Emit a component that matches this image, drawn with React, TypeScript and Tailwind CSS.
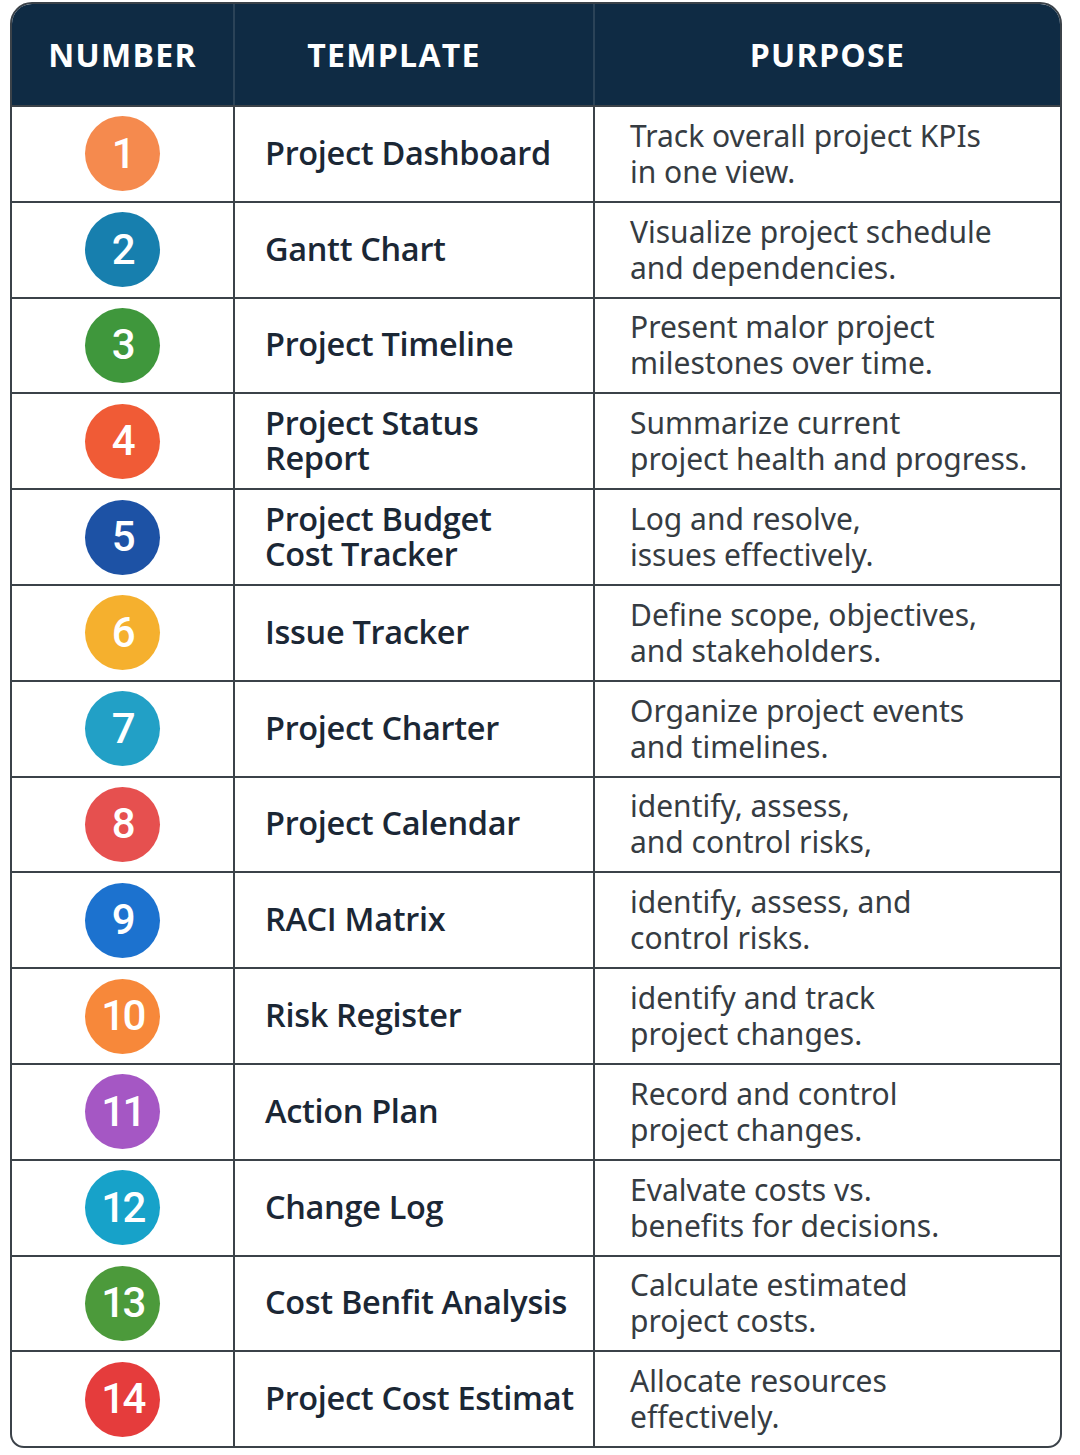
const rows = [
  { n: 1, color: "bg-[#f58a4e]", name: ["Project Dashboard"], purpose: ["Track overall project KPIs", "in one view."] },
  { n: 2, color: "bg-[#177fae]", name: ["Gantt Chart"], purpose: ["Visualize project schedule", "and dependencies."] },
  { n: 3, color: "bg-[#3f973c]", name: ["Project Timeline"], purpose: ["Present malor project", "milestones over time."] },
  { n: 4, color: "bg-[#f05b36]", name: ["Project Status", "Report"], purpose: ["Summarize current", "project health and progress."] },
  { n: 5, color: "bg-[#1d52a5]", name: ["Project Budget", "Cost Tracker"], purpose: ["Log and resolve,", "issues effectively."] },
  { n: 6, color: "bg-[#f5b02e]", name: ["Issue Tracker"], purpose: ["Define scope, objectives,", "and stakeholders."] },
  { n: 7, color: "bg-[#22a0c6]", name: ["Project Charter"], purpose: ["Organize project events", "and timelines."] },
  { n: 8, color: "bg-[#e6504f]", name: ["Project Calendar"], purpose: ["identify, assess,", "and control risks,"] },
  { n: 9, color: "bg-[#1c72cf]", name: ["RACI Matrix"], purpose: ["identify, assess, and", "control risks."] },
  { n: 10, color: "bg-[#f7883a]", name: ["Risk Register"], purpose: ["identify and track", "project changes."] },
  { n: 11, color: "bg-[#a557c4]", name: ["Action Plan"], purpose: ["Record and control", "project changes."] },
  { n: 12, color: "bg-[#17a2c9]", name: ["Change Log"], purpose: ["Evalvate costs vs.", "benefits for decisions."] },
  { n: 13, color: "bg-[#4c9a3b]", name: ["Cost Benfit Analysis"], purpose: ["Calculate estimated", "project costs."] },
  { n: 14, color: "bg-[#e53c3c]", name: ["Project Cost Estimat"], purpose: ["Allocate resources", "effectively."] },
];

const App = () => {
  return (
    <div className="w-[1080px] h-[1455px] bg-white pl-[10px] pt-[2px]">
      <div className="w-[1052px] border-2 border-[#3b4249] rounded-t-[22px] rounded-b-[14px] overflow-hidden bg-white">
        {/* Header */}
        <div className="grid grid-cols-[221px_360px_1fr] h-[101px] bg-[#0f2b44] text-white font-['Open_Sans',sans-serif] font-bold text-[32px] tracking-[0.04em]">
          <div className="flex items-center justify-center">NUMBER</div>
          <div className="flex items-center justify-center pr-[40px] border-l-2 border-[#2b4358]">TEMPLATE</div>
          <div className="flex items-center justify-center border-l-2 border-[#2b4358]">PURPOSE</div>
        </div>

        {/* Rows */}
        {rows.map((r) => (
          <div key={r.n} className="grid grid-cols-[221px_360px_1fr] h-[95.8px] border-t-2 border-[#3b4249]">
            <div className="flex items-center justify-center">
              <div className={`w-[75px] h-[75px] rounded-full ${r.color} flex items-center justify-center text-white font-['Roboto',sans-serif] font-medium text-[42px] tracking-[-0.06em] leading-none`}>
                {r.n}
              </div>
            </div>
            <div className="flex flex-col justify-center pl-[30px] pb-[3px] border-l-2 border-[#3b4249] font-['Open_Sans',sans-serif] font-semibold text-[32.5px] leading-[35px] text-[#1b2735] tracking-[-0.01em]">
              {r.name.map((t) => (
                <span key={t}>{t}</span>
              ))}
            </div>
            <div className="flex flex-col justify-center pl-[35px] border-l-2 border-[#3b4249] font-['Noto_Sans',sans-serif] text-[30px] leading-[36px] text-[#363c42]">
              {r.purpose.map((t) => (
                <span key={t}>{t}</span>
              ))}
            </div>
          </div>
        ))}
      </div>
    </div>
  );
};

export default App;
